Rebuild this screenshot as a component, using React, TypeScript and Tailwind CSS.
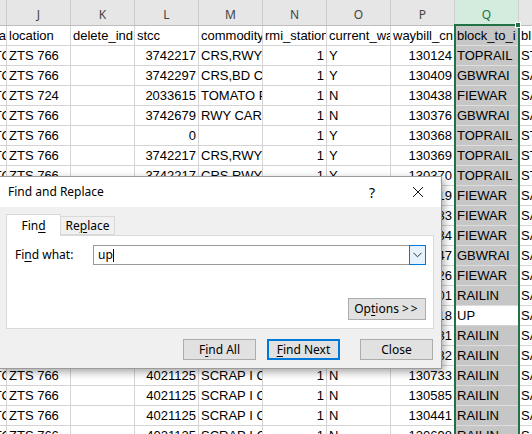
import React from "react";

type Row = {
  i: string;
  j: string;
  k: string;
  l: string;
  m: string;
  n: string;
  o: string;
  p: string;
  q: string;
  r: string;
};

const head: Row = {
  i: "a",
  j: "location",
  k: "delete_ind",
  l: "stcc",
  m: "commodity",
  n: "rmi_station",
  o: "current_wa",
  p: "waybill_cn",
  q: "block_to_i",
  r: "bl",
};

const mk = (l: string, m: string, o: string, p: string, q: string, r: string, j = "ZTS 766"): Row => ({
  i: "TC",
  j,
  k: "",
  l,
  m,
  n: "1",
  o,
  p,
  q,
  r,
});

const rows: Row[] = [
  mk("3742217", "CRS,RWY CAR", "Y", "130124", "TOPRAIL", "ST"),
  mk("3742297", "CRS,BD CO", "Y", "130409", "GBWRAI", "SA"),
  mk("2033615", "TOMATO PASTE", "N", "130438", "FIEWAR", "SA", "ZTS 724"),
  mk("3742679", "RWY CAR", "N", "130376", "GBWRAI", "SA"),
  mk("0", "", "Y", "130368", "TOPRAIL", "ST"),
  mk("3742217", "CRS,RWY CAR", "Y", "130369", "TOPRAIL", "ST"),
  mk("3742217", "CRS,RWY CAR", "Y", "130370", "TOPRAIL", "ST"),
  mk("3742217", "CRS,RWY CAR", "Y", "130419", "FIEWAR", "SA"),
  mk("3742217", "CRS,RWY CAR", "Y", "130433", "FIEWAR", "SA"),
  mk("3742217", "CRS,RWY CAR", "Y", "130434", "FIEWAR", "SA"),
  mk("3742217", "CRS,RWY CAR", "Y", "130447", "GBWRAI", "SA"),
  mk("3742217", "CRS,RWY CAR", "Y", "130426", "FIEWAR", "SA"),
  mk("4021125", "SCRAP I CAN", "N", "130401", "RAILIN", "SA"),
  mk("4021125", "SCRAP I CAN", "N", "130418", "UP", "SA"),
  mk("4021125", "SCRAP I CAN", "N", "130431", "RAILIN", "SA"),
  mk("4021125", "SCRAP I CAN", "N", "130432", "RAILIN", "SA"),
  mk("4021125", "SCRAP I CAN", "N", "130733", "RAILIN", "SA"),
  mk("4021125", "SCRAP I CAN", "N", "130585", "RAILIN", "SA"),
  mk("4021125", "SCRAP I CAN", "N", "130441", "RAILIN", "SA"),
  mk("4021125", "SCRAP I CAN", "N", "130698", "RAILIN", "SA"),
];

const cell = "h-full shrink-0 overflow-hidden whitespace-nowrap border-r border-b border-[#d4d4d4] leading-[20px]";

function SheetRow({ row, isHead, active }: { row: Row; isHead?: boolean; active?: boolean }) {
  const num = isHead ? "text-left pl-[2px]" : "text-right pr-[2px]";
  return (
    <div className="flex h-[20px]">
      <div className={`${cell} w-[7px] flex justify-end`}>
        <span className={isHead ? "" : "mr-[-5px]"}>{row.i}</span>
      </div>
      <div className={`${cell} w-[64px] pl-[2px]`}>{row.j}</div>
      <div className={`${cell} w-[64px] pl-[2px]`}>{row.k}</div>
      <div className={`${cell} w-[64px] ${num}`}>{row.l}</div>
      <div className={`${cell} w-[64px] pl-[2px]`}>{row.m}</div>
      <div className={`${cell} w-[64px] ${num}`}>{row.n}</div>
      <div className={`${cell} w-[64px] pl-[2px]`}>{row.o}</div>
      <div className={`${cell} w-[64px] ${num}`}>{row.p}</div>
      <div
        className={`${cell} w-[64px] pl-[2px] ${
          active ? "bg-white" : "bg-[#c6c6c6] border-b-[#dedede]"
        }`}
      >
        {row.q}
      </div>
      <div className={`${cell} w-[14px] pl-[2px] border-r-0`}>{row.r}</div>
    </div>
  );
}

function Btn({ children, w, focus, className = "" }: { children: React.ReactNode; w: string; focus?: boolean; className?: string }) {
  return (
    <div
      className={`${w} h-[21px] flex items-center justify-center bg-[#e1e1e1] ${
        focus ? "border-2 border-[#0078d7]" : "border border-[#adadad]"
      } ${className}`}
    >
      {children}
    </div>
  );
}

const U = ({ c }: { c: string }) => <span className="underline underline-offset-[2px]">{c}</span>;

function FindDialog() {
  return (
    <div className="absolute left-[-1px] top-[176px] w-[443px] h-[193px] flex flex-col border border-[#9b9b9b] bg-[#f0f0f0] shadow-[2px_3px_8px_rgba(0,0,0,0.35)] font-['Noto_Sans',sans-serif] text-[12px] text-black">
      <div className="h-[30px] shrink-0 bg-white flex items-center pl-[8px]">
        <span>Find and Replace</span>
        <span className="ml-auto w-[46px] text-center text-[14px]">?</span>
        <div className="w-[46px] flex justify-center">
          <svg width="12" height="12" viewBox="0 0 12 12">
            <path d="M1 1 L11 11 M11 1 L1 11" stroke="#111" strokeWidth="1" />
          </svg>
        </div>
      </div>

      <div className="flex-1 flex flex-col pt-[7px] px-[6px]">
        <div className="flex items-end h-[22px] relative z-10 mb-[-1px]">
          <div className="w-[55px] h-[22px] bg-white border border-b-0 border-[#d9d9d9] flex items-center justify-center">
            <span>
              Fin<U c="d" />
            </span>
          </div>
          <div className="w-[54px] h-[19px] mb-[1px] bg-[#f0f0f0] border border-l-0 border-[#d9d9d9] flex items-center justify-center">
            <span>
              Re<U c="p" />lace
            </span>
          </div>
        </div>

        <div className="w-[428px] h-[94px] bg-white border border-[#d9d9d9] pt-[9px] pl-[8px] pr-[7px] flex flex-col">
          <div className="flex items-center h-[20px]">
            <span className="w-[78px] shrink-0">
              Fi<U c="n" />d what:
            </span>
            <div className="flex-1 h-[20px] border border-[#999] flex items-center pl-[4px]">
              <span>up</span>
              <span className="w-[1px] h-[13px] bg-black" />
              <div className="ml-auto -mr-[1px] w-[17px] h-[20px] border border-[#0078d7] bg-[#e5f1fb] flex items-center justify-center">
                <svg width="9" height="6" viewBox="0 0 9 6">
                  <path d="M0.5 0.8 L4.5 4.8 L8.5 0.8" fill="none" stroke="#333" strokeWidth="1" />
                </svg>
              </div>
            </div>
          </div>
          <div className="flex justify-end mt-[33px]">
            <Btn w="w-[78px]" className="h-[22px]">
              <span>
                Op<U c="t" />ions <span className="tracking-[2px]">&gt;&gt;</span>
              </span>
            </Btn>
          </div>
        </div>

        <div className="flex justify-end pr-[2px] mt-[10px]">
          <Btn w="w-[73px]">
            <span>
              F<U c="i" />nd All
            </span>
          </Btn>
          <Btn w="w-[73px]" focus className="ml-[11px]">
            <span>
              <U c="F" />ind Next
            </span>
          </Btn>
          <Btn w="w-[73px]" className="ml-[20px]">
            Close
          </Btn>
        </div>
      </div>
    </div>
  );
}

export default function App() {
  const letters = ["J", "K", "L", "M", "N", "O", "P", "Q"];
  return (
    <div className="relative w-[532px] h-[434px] overflow-hidden bg-white font-['Liberation_Sans',sans-serif] text-[13px] text-black">
      <div className="flex h-[26px] bg-[#e6e6e6] border-b border-[#bdbdbd] font-['Noto_Sans',sans-serif] text-[12px] text-[#444]">
        <div className="w-[7px] shrink-0 border-r border-[#cfcfcf]" />
        {letters.map((l) => (
          <div
            key={l}
            className={`w-[64px] shrink-0 border-r border-[#cfcfcf] flex justify-center pt-[6px] ${
              l === "Q" ? "bg-[#d3ecdd] text-[#217346]" : ""
            }`}
          >
            {l}
          </div>
        ))}
        <div className="flex-1" />
      </div>

      <SheetRow row={head} isHead />
      {rows.map((r, idx) => (
        <SheetRow key={idx} row={r} active={idx === 13} />
      ))}

      {/* selection outline on column Q */}
      <div className="absolute left-[454px] top-[24px] w-[66px] h-[420px] border-2 border-[#217346]" />
      <div className="absolute left-[515px] top-[22px] w-[6px] h-[6px] bg-[#217346] border border-white" />

      <FindDialog />
    </div>
  );
}
